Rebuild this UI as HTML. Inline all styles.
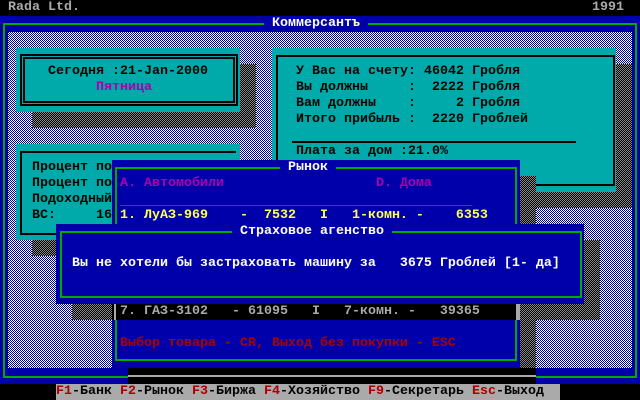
<!DOCTYPE html>
<html><head><meta charset="utf-8"><style>
*{margin:0;padding:0}
body{width:640px;height:400px;background:#0000aa;position:relative;overflow:hidden;font-family:"Liberation Mono","DejaVu Sans Mono",monospace;font-size:13.33px;font-weight:bold;line-height:16px}
div{position:absolute}
.t{white-space:pre}
.chk{background:repeating-conic-gradient(#fff 0 25%,#0000aa 0 50%) 0 0/2px 2px}
.sh{background:repeating-conic-gradient(#000 0 25%,#888 0 50%) 0 0/2px 2px}
.cy{background:#00aaaa}
.bl{background:#0000aa}
</style></head><body>
<div style="left:0;top:0;width:640px;height:16px;background:#000"></div>
<div class="t" style="left:8px;top:0;color:#aaa">Rada Ltd.</div>
<div class="t" style="left:592px;top:0;color:#aaa">1991</div>
<div style="left:3px;top:23px;width:630px;height:351px;border:2px solid #00aa00"></div>
<div class="t bl" style="left:264px;top:16px;color:#fff;padding:0 8px">Коммерсантъ</div>
<div class="chk" style="left:8px;top:32px;width:624px;height:336px"></div>
<!-- window 1 -->
<div class="sh" style="left:32px;top:64px;width:224px;height:64px"></div>
<div class="cy" style="left:16px;top:48px;width:224px;height:64px"></div>
<div style="left:20px;top:54px;width:208px;height:42px;border:5px double #000"></div>
<div class="t" style="left:48px;top:64px;color:#000">Сегодня :21-Jan-2000</div>
<div class="t" style="left:96px;top:80px;color:#aa00aa">Пятница</div>
<!-- window 2 -->
<div class="sh" style="left:288px;top:64px;width:344px;height:144px"></div>
<div class="cy" style="left:272px;top:48px;width:344px;height:144px"></div>
<div style="left:276px;top:55px;width:335px;height:127px;border:2px solid #000"></div>
<div class="t" style="left:296px;top:64px;color:#000">У Вас на счету: 46042 Гробля
Вы должны     :  2222 Гробля
Вам должны    :     2 Гробля
Итого прибыль :  2220 Гроблей</div>
<div style="left:292px;top:141px;width:284px;height:2px;background:#000"></div>
<div class="t" style="left:296px;top:144px;color:#000">Плата за дом :21.0%</div>
<!-- window 3 -->
<div class="sh" style="left:32px;top:160px;width:224px;height:96px"></div>
<div class="cy" style="left:16px;top:144px;width:224px;height:96px"></div>
<div style="left:20px;top:151px;width:214px;height:80px;border:2px solid #000;border-right:none"></div>
<div class="t" style="left:32px;top:160px;color:#000">Процент по
Процент по
Подоходный
ВС:     16</div>
<!-- market shadow -->
<div class="sh" style="left:520px;top:176px;width:16px;height:192px"></div>
<div style="left:128px;top:368px;width:408px;height:16px;background:#000"></div>
<div style="left:128px;top:375px;width:408px;height:2px;background:#aaa"></div>
<!-- market window -->
<div class="bl" style="left:112px;top:160px;width:408px;height:208px"></div>
<div style="left:115px;top:167px;width:398px;height:190px;border:2px solid #00aa00"></div>
<div class="t bl" style="left:280px;top:160px;color:#fff;padding:0 8px">Рынок</div>
<div class="t" style="left:120px;top:176px;color:#aa00aa">А. Автомобили                   D. Дома</div>
<div style="left:120px;top:205px;width:352px;height:1px;background:#aa00aa"></div>
<div class="t" style="left:120px;top:208px;color:#ffff55">1. ЛуАЗ-969    -  7532   I   1-комн. -    6353</div>
<div class="t" style="left:120px;top:336px;color:#aa0000">Выбор товара - CR, Выход без покупки - ESC</div>
<!-- insurance -->
<div class="sh" style="left:72px;top:240px;width:528px;height:80px"></div>
<div style="left:112px;top:304px;width:404px;height:16px;background:#000"></div>
<div style="left:114px;top:304px;width:2px;height:16px;background:#aaa"></div>
<div style="left:516px;top:304px;width:4px;height:16px;background:#aaa"></div>
<div class="t" style="left:120px;top:304px;color:#aaa">7. ГАЗ-3102   - 61095   I   7-комн. -   39365</div>
<div class="bl" style="left:56px;top:224px;width:528px;height:80px"></div>
<div style="left:60px;top:231px;width:518px;height:63px;border:2px solid #00aa00"></div>
<div class="t bl" style="left:232px;top:224px;color:#fff;padding:0 8px">Страховое агенство</div>
<div class="t" style="left:72px;top:256px;color:#fff">Вы не хотели бы застраховать машину за   3675 Гроблей [1- да]</div>
<!-- bottom bar -->
<div style="left:0;top:384px;width:640px;height:16px;background:#000"></div>
<div class="t" style="left:56px;top:384px;width:504px;background:#aaa;color:#000"><span style="color:#aa0000">F1</span>-Банк <span style="color:#aa0000">F2</span>-Рынок <span style="color:#aa0000">F3</span>-Биржа <span style="color:#aa0000">F4</span>-Хозяйство <span style="color:#aa0000">F9</span>-Секретарь <span style="color:#aa0000">Esc</span>-Выход</div>
</body></html>
